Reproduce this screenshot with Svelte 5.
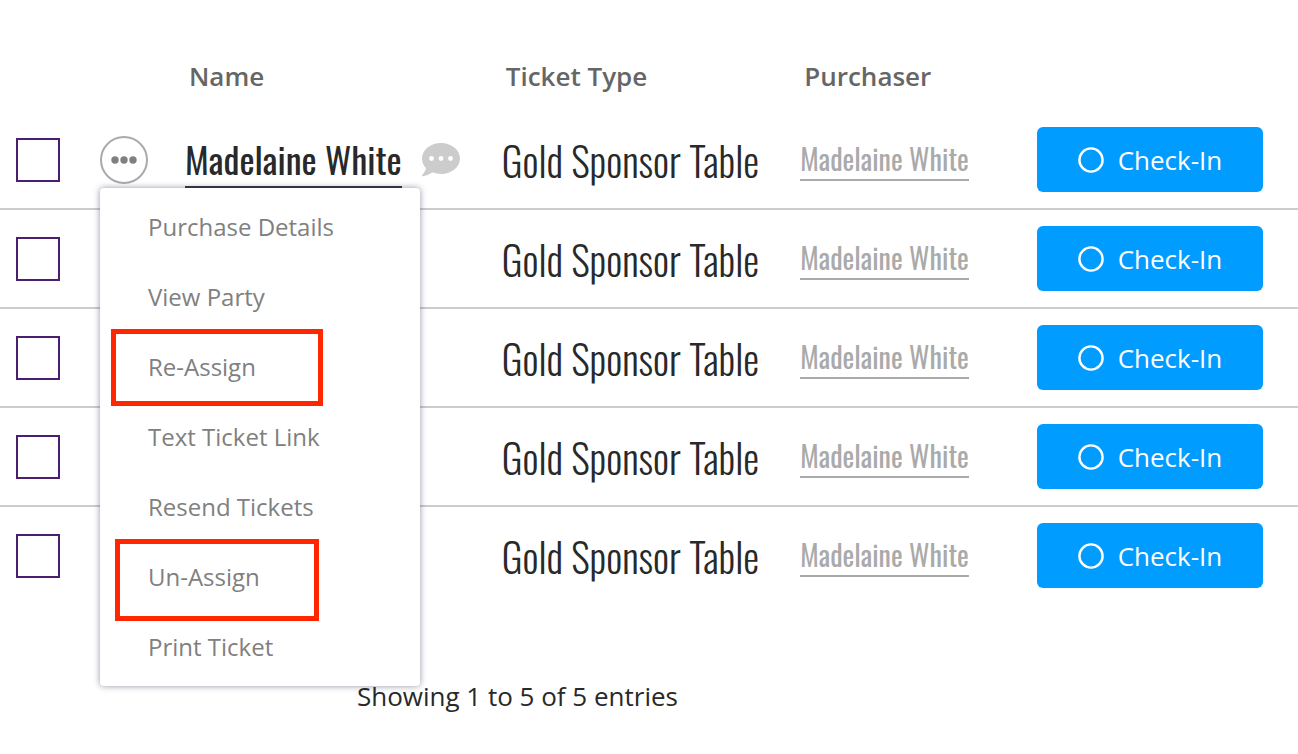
<script lang="ts">
	type Ticket = {
		id: number;
		name: string;
		type: string;
		purchaser: string;
	};

	type MenuItem = {
		label: string;
		mark?: 'wide' | 'tall';
	};

	const tickets: Ticket[] = [1, 2, 3, 4, 5].map((id) => ({
		id,
		name: id === 1 ? 'Madelaine White' : '',
		type: 'Gold Sponsor Table',
		purchaser: 'Madelaine White'
	}));

	const menuItems: MenuItem[] = [
		{ label: 'Purchase Details' },
		{ label: 'View Party' },
		{ label: 'Re-Assign', mark: 'wide' },
		{ label: 'Text Ticket Link' },
		{ label: 'Resend Tickets' },
		{ label: 'Un-Assign', mark: 'tall' },
		{ label: 'Print Ticket' }
	];

	let openId: number | null = $state(1);
	let selected: number[] = $state([]);

	function toggleMenu(id: number) {
		openId = openId === id ? null : id;
	}
</script>

<main>
	<table>
		<colgroup>
			<col class="col-check" />
			<col class="col-menu" />
			<col class="col-name" />
			<col class="col-type" />
			<col />
			<col class="col-action" />
		</colgroup>
		<thead>
			<tr>
				<td></td>
				<td></td>
				<th scope="col">Name</th>
				<th scope="col">Ticket Type</th>
				<th scope="col">Purchaser</th>
				<td></td>
			</tr>
		</thead>
		<tbody>
			{#each tickets as t (t.id)}
				<tr>
					<td class="check">
						<input type="checkbox" value={t.id} bind:group={selected} aria-label="Select ticket {t.id}" />
					</td>
					<td>
						{#if t.name}
							<div class="menu-wrap">
								<button
									class="dots"
									onclick={() => toggleMenu(t.id)}
									aria-label="Ticket actions"
									aria-expanded={openId === t.id}
								>
									<svg viewBox="0 0 26 8" width="26" height="8" fill="currentColor" aria-hidden="true">
										<circle cx="4" cy="4" r="3.7" />
										<circle cx="13" cy="4" r="3.7" />
										<circle cx="22" cy="4" r="3.7" />
									</svg>
								</button>
								{#if openId === t.id}
									<ul class="menu">
										{#each menuItems as item (item.label)}
											<li>
												<button>{item.label}</button>
												{#if item.mark}
													<span class="mark {item.mark}" aria-hidden="true"></span>
												{/if}
											</li>
										{/each}
									</ul>
								{/if}
							</div>
						{/if}
					</td>
					<td>
						{#if t.name}
							<div class="name-cell">
								<a class="name" href="#ticket-{t.id}">{t.name}</a>
								<button class="note" aria-label="Notes">
									<svg viewBox="0 0 38 34" width="38" height="34" aria-hidden="true">
										<path
											d="M19 0C29.5 0 38 7 38 15.500S29.500 31 19 31c-3 0-6-.6-8.500-1.700C7.500 31.500 3.800 33.200.6 33.200c-.7 0-.9-.7-.5-1.200C2 30 3.500 27.500 4 25.200 1.500 22.500 0 19.200 0 15.500 0 7 8.500 0 19 0z"
											fill="#ccc"
										/>
										<circle cx="9.500" cy="15.500" r="2.400" fill="#fff" />
										<circle cx="19" cy="15.500" r="2.400" fill="#fff" />
										<circle cx="28.500" cy="15.500" r="2.400" fill="#fff" />
									</svg>
								</button>
							</div>
						{/if}
					</td>
					<td class="type">{t.type}</td>
					<td><a class="purchaser" href="#purchaser-{t.id}">{t.purchaser}</a></td>
					<td>
						<button class="checkin">
							<svg viewBox="0 0 26 26" width="26" height="26" aria-hidden="true">
								<circle cx="13" cy="13" r="11.600" fill="none" stroke="currentColor" stroke-width="2.400" />
							</svg>
							Check-In
						</button>
					</td>
				</tr>
			{/each}
		</tbody>
	</table>
	<p class="info">Showing 1 to 5 of 5 entries</p>
</main>

<style>
	:global(body) {
		background: #fff;
	}

	main {
		--condensed: Oswald, 'Liberation Sans Narrow', 'DejaVu Sans Condensed', sans-serif;
		font-family: 'Open Sans', sans-serif;
		color: #27292a;
	}

	button {
		font: inherit;
		border: 0;
		padding: 0;
		background: transparent;
		cursor: pointer;
	}

	table {
		width: 100%;
		table-layout: fixed;
		border-collapse: separate;
		border-spacing: 0;
	}
	.col-check {
		width: 100px;
	}
	.col-menu {
		width: 85px;
	}
	.col-name {
		width: 24.4%;
	}
	.col-type {
		width: 23%;
	}
	.col-action {
		width: 261px;
	}

	thead tr {
		height: 111px;
	}
	th {
		padding: 42px 0 0 4px;
		vertical-align: top;
		text-align: left;
		font-size: 26px;
		line-height: 68px;
		font-weight: 600;
		color: #666;
	}

	tbody td {
		height: 97px;
		padding: 0;
		vertical-align: middle;
		border-bottom: 2px solid #ccc;
		white-space: nowrap;
	}
	tbody tr:last-child td {
		border-bottom-color: transparent;
	}

	.check input {
		display: block;
		appearance: none;
		width: 44px;
		height: 44px;
		margin: 0 0 0 16px;
		border: 2px solid #4b1f6f;
		background: #fff;
	}
	.check input:checked {
		background: #4b1f6f;
		box-shadow: inset 0 0 0 6px #fff;
	}

	.menu-wrap {
		position: relative;
	}
	.dots {
		display: flex;
		align-items: center;
		justify-content: center;
		width: 48px;
		height: 48px;
		border: 2px solid #aaa;
		border-radius: 50%;
		color: #808080;
	}
	.menu {
		position: absolute;
		top: 52px;
		left: 0;
		z-index: 2;
		width: 320px;
		box-sizing: border-box;
		margin: 0;
		padding: 4px 0;
		list-style: none;
		background: #fff;
		border-radius: 4px;
		box-shadow: 0 0 6px rgba(40, 40, 80, 0.5);
	}
	.menu li {
		position: relative;
	}
	.menu button {
		width: 100%;
		padding-left: 48px;
		text-align: left;
		font-size: 24px;
		line-height: 70px;
		color: #808080;
	}
	.mark {
		position: absolute;
		box-sizing: border-box;
		border: 5px solid #ff2600;
		pointer-events: none;
	}
	.mark.wide {
		top: -3px;
		bottom: -4px;
		left: 11px;
		width: 212px;
	}
	.mark.tall {
		top: -3px;
		bottom: -9px;
		left: 15px;
		width: 204px;
	}

	.name-cell {
		display: flex;
		align-items: center;
		gap: 20px;
	}
	.name {
		font-family: var(--condensed);
		font-size: 36px;
		line-height: 54px;
		font-weight: 400;
		color: #27292a;
		text-decoration: none;
		border-bottom: 2px solid #343a40;
	}
	.note {
		display: flex;
	}
	.type {
		font-family: var(--condensed);
		font-size: 40px;
		line-height: 60px;
		font-weight: 300;
	}
	.purchaser {
		display: inline-block;
		font-family: var(--condensed);
		font-size: 28px;
		line-height: 40px;
		color: #aaa;
		text-decoration: none;
		border-bottom: 2px solid #aaa;
	}

	.checkin {
		display: flex;
		align-items: center;
		justify-content: center;
		gap: 14px;
		width: 226px;
		height: 65px;
		border-radius: 6px;
		background: #009cff;
		color: #fff;
		font-size: 26px;
	}

	.info {
		margin: 0;
		padding: 70px 0 40px 27.5%;
		font-size: 26px;
		line-height: 40px;
	}
</style>
